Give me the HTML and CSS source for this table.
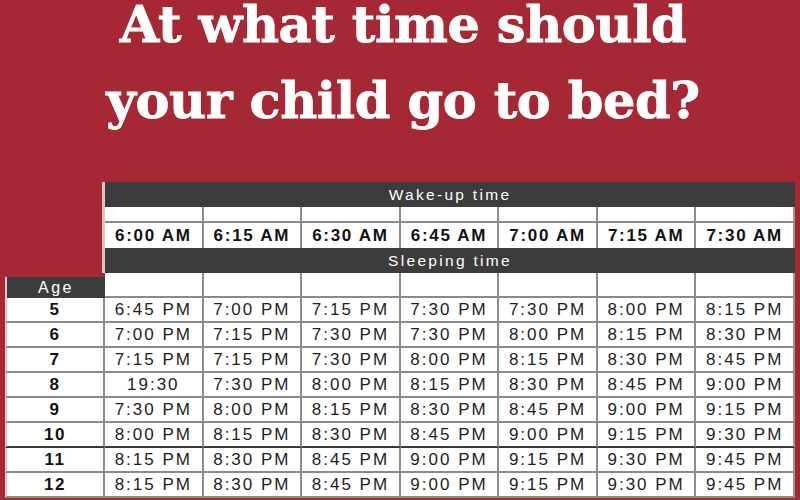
FILE: index.html
```html
<!DOCTYPE html>
<html>
<head>
<meta charset="utf-8">
<link rel="stylesheet" href="styles.css">
</head>
<body>
<header class="hero">
  <h1 class="title"><span class="line">At what time should</span><span class="line line-2">your child go to bed?</span></h1>
</header>
<main class="grid">
  <div class="void"></div>
  <div class="band band-wake">Wake-up time</div>
  <div class="cell spacer"></div><div class="cell spacer"></div><div class="cell spacer"></div><div class="cell spacer"></div><div class="cell spacer"></div><div class="cell spacer"></div><div class="cell spacer last"></div>
  <div class="cell wake">6:00 AM</div><div class="cell wake">6:15 AM</div><div class="cell wake">6:30 AM</div><div class="cell wake">6:45 AM</div><div class="cell wake">7:00 AM</div><div class="cell wake">7:15 AM</div><div class="cell wake last">7:30 AM</div>
  <div class="band band-sleep">Sleeping time</div>
  <div class="age-head">Age</div>
  <div class="cell"></div><div class="cell"></div><div class="cell"></div><div class="cell"></div><div class="cell"></div><div class="cell"></div><div class="cell last"></div>

  <div class="cell age">5</div><div class="cell">6:45 PM</div><div class="cell">7:00 PM</div><div class="cell">7:15 PM</div><div class="cell">7:30 PM</div><div class="cell">7:30 PM</div><div class="cell">8:00 PM</div><div class="cell last">8:15 PM</div>
  <div class="cell age">6</div><div class="cell">7:00 PM</div><div class="cell">7:15 PM</div><div class="cell">7:30 PM</div><div class="cell">7:30 PM</div><div class="cell">8:00 PM</div><div class="cell">8:15 PM</div><div class="cell last">8:30 PM</div>
  <div class="cell age">7</div><div class="cell">7:15 PM</div><div class="cell">7:15 PM</div><div class="cell">7:30 PM</div><div class="cell">8:00 PM</div><div class="cell">8:15 PM</div><div class="cell">8:30 PM</div><div class="cell last">8:45 PM</div>
  <div class="cell age">8</div><div class="cell">19:30</div><div class="cell">7:30 PM</div><div class="cell">8:00 PM</div><div class="cell">8:15 PM</div><div class="cell">8:30 PM</div><div class="cell">8:45 PM</div><div class="cell last">9:00 PM</div>
  <div class="cell age">9</div><div class="cell">7:30 PM</div><div class="cell">8:00 PM</div><div class="cell">8:15 PM</div><div class="cell">8:30 PM</div><div class="cell">8:45 PM</div><div class="cell">9:00 PM</div><div class="cell last">9:15 PM</div>
  <div class="cell age dark-b">10</div><div class="cell dark-b">8:00 PM</div><div class="cell dark-b">8:15 PM</div><div class="cell dark-b">8:30 PM</div><div class="cell dark-b">8:45 PM</div><div class="cell dark-b">9:00 PM</div><div class="cell dark-b">9:15 PM</div><div class="cell last dark-b">9:30 PM</div>
  <div class="cell age">11</div><div class="cell">8:15 PM</div><div class="cell">8:30 PM</div><div class="cell">8:45 PM</div><div class="cell">9:00 PM</div><div class="cell">9:15 PM</div><div class="cell">9:30 PM</div><div class="cell last">9:45 PM</div>
  <div class="cell age">12</div><div class="cell">8:15 PM</div><div class="cell">8:30 PM</div><div class="cell">8:45 PM</div><div class="cell">9:00 PM</div><div class="cell">9:15 PM</div><div class="cell">9:30 PM</div><div class="cell last">9:45 PM</div>
</main>
</body>
</html>
```
FILE: styles.css
```css
html, body {
  margin: 0;
  padding: 0;
  width: 800px;
  height: 500px;
  overflow: hidden;
  background: #a52834;
}

.hero {
  display: flow-root;
  height: 182px;
}

.title {
  margin: 0;
  padding-left: 6px;
  font-family: "DejaVu Serif", "Liberation Serif", serif;
  font-weight: bold;
  font-size: 51px;
  line-height: 49px;
  letter-spacing: -0.4px;
  color: #ffffff;
  -webkit-text-stroke: 0.8px #ffffff;
  text-align: center;
}

.line { display: block; }
.line-2 { margin-top: 27px; }

.grid {
  display: grid;
  grid-template-columns: 100px repeat(7, 1fr);
  grid-template-rows: 25px 16px 25px 25px 25px repeat(8, 25px);
  margin: 0 5px;
  font-family: "Liberation Sans", Arial, sans-serif;
}

.void {
  grid-column: 1;
  grid-row: 1 / 5;
  box-sizing: border-box;
  border-right: 3px solid #e2c6c9;
}

.band {
  grid-column: 2 / 9;
  background: #3c3c3c;
  color: #ffffff;
  font-size: 15.5px;
  letter-spacing: 2.3px;
  display: flex;
  align-items: center;
  justify-content: center;
}

.band-wake { grid-row: 1; }
.band-sleep { grid-row: 4; }

.cell {
  box-sizing: border-box;
  background: #ffffff;
  border-right: 2px solid #8d8d8d;
  border-bottom: 2px solid #8a8a8a;
  display: flex;
  align-items: center;
  justify-content: center;
  font-size: 17px;
  letter-spacing: 2px;
  color: #1e1e1e;
  white-space: nowrap;
}

.cell.last { border-right: 2px solid #9a9a9a; }

.wake {
  font-weight: bold;
  letter-spacing: 1.7px;
  color: #111111;
  border-bottom: none;
}

.age-head {
  grid-column: 1;
  grid-row: 5;
  box-sizing: border-box;
  margin-top: 4px;
  background: #3c3c3c;
  border-left: 2px solid #e2c6c9;
  color: #ffffff;
  font-size: 16px;
  letter-spacing: 2.5px;
  display: flex;
  align-items: center;
  justify-content: center;
}

.age {
  font-weight: bold;
  letter-spacing: 1.5px;
  color: #111111;
  border-left: 2px solid #e2c6c9;
}

.cell.dark-b { border-bottom-color: #3a3a3a; }
```
